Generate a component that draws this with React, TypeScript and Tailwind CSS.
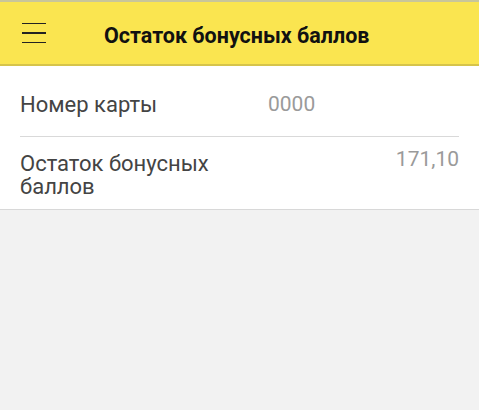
export default function App() {
  return (
    <div className="min-h-[410px] bg-[#f2f2f2] font-['Roboto',sans-serif]">
      <header className="flex h-[66px] items-center border-t-2 border-b-2 border-t-[#c9c69a] border-b-[#d6c44a] bg-[#fae550]">
        <button type="button" className="ml-[22px] flex w-6 flex-col gap-[8px]" aria-label="Меню">
          <span className="block h-[1.5px] w-6 bg-[#222]" />
          <span className="block h-[1.5px] w-6 bg-[#222]" />
          <span className="block h-[1.5px] w-6 bg-[#222]" />
        </button>
        <h1 className="ml-[58px] mt-[6px] text-[21.5px] font-bold text-[#111]">Остаток бонусных баллов</h1>
      </header>

      <div className="border-b border-[#d8d8d8] bg-white px-5">
        <div className="flex h-[71px] items-start border-b border-[#d9d9d9] pt-[26.5px]">
          <span className="w-[248px] text-[22px] leading-[23px] text-[#444]">Номер карты</span>
          <span className="text-[21px] leading-[23px] text-[#9a9a9a]">0000</span>
        </div>
        <div className="flex items-start justify-between pt-[14.5px] pb-[11.5px]">
          <span className="w-[230px] text-[22px] leading-[23px] text-[#444]">Остаток бонусных баллов</span>
          <span className="-mt-[4px] text-[21px] leading-[23px] text-[#9a9a9a]">171,10</span>
        </div>
      </div>
    </div>
  )
}
